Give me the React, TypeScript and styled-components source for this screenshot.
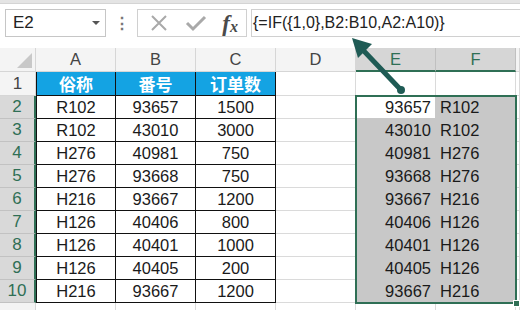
import React from "react";
import styled, { createGlobalStyle, css } from "styled-components";

const GlobalStyle = createGlobalStyle`
    html, body {
        margin: 0;
        padding: 0;
        background: #ffffff;
        font-family: "Liberation Sans", Arial, "Noto Sans CJK SC", sans-serif;
    }
    * {
        box-sizing: border-box;
    }
`;

const green = "#2f6f55";

const rows = [
    ["R102", "93657", "1500"],
    ["R102", "43010", "3000"],
    ["H276", "40981", "750"],
    ["H276", "93668", "750"],
    ["H216", "93667", "1200"],
    ["H126", "40406", "800"],
    ["H126", "40401", "1000"],
    ["H126", "40405", "200"],
    ["H216", "93667", "1200"],
];

const columns = ["A", "B", "C", "D", "E", "F"];

export default function App() {
    return (
        <Page>
            <GlobalStyle />
            <TopStrip />
            <FormulaBar>
                <NameBox>
                    <span>E2</span>
                    <Caret />
                </NameBox>
                <Grip>⋮</Grip>
                <FxBox>
                    <svg width="20" height="20" viewBox="0 0 20 20">
                        <path d="M3 3 L17 17 M17 3 L3 17" stroke="#a9a9a9" strokeWidth="2" fill="none" />
                    </svg>
                    <svg width="22" height="20" viewBox="0 0 22 20">
                        <path d="M2 10 L8 16 L20 4" stroke="#a9a9a9" strokeWidth="3" fill="none" />
                    </svg>
                    <FxLabel>
                        f<sub>x</sub>
                    </FxLabel>
                </FxBox>
                <FormulaInput>{"{=IF({1,0},B2:B10,A2:A10)}"}</FormulaInput>
            </FormulaBar>

            <Sheet>
                <Corner>
                    <CornerTriangle />
                </Corner>
                {columns.map((c) => (
                    <ColHeader key={c} selected={c === "E" || c === "F"}>
                        {c}
                    </ColHeader>
                ))}
                <ColHeader />

                <RowHeader>1</RowHeader>
                <Cell kind="head" first>俗称</Cell>
                <Cell kind="head">番号</Cell>
                <Cell kind="head">订单数</Cell>
                <Cell />
                <Cell />
                <Cell />
                <Cell />

                {rows.map((r, i) => (
                    <React.Fragment key={i}>
                        <RowHeader selected>{i + 2}</RowHeader>
                        <Cell kind="table" first>{r[0]}</Cell>
                        <Cell kind="table">{r[1]}</Cell>
                        <Cell kind="table">{r[2]}</Cell>
                        <Cell />
                        <Cell kind={i === 0 ? "active" : "picked"} align="right">
                            {r[1]}
                        </Cell>
                        <Cell kind="picked" align="left">
                            {r[0]}
                        </Cell>
                        <Cell />
                    </React.Fragment>
                ))}

                <RowHeader />
                {columns.map((c) => (
                    <Cell key={c} />
                ))}
                <Cell />

                <Selection>
                    <FillHandle />
                </Selection>
            </Sheet>

            <Arrow width="60" height="62" viewBox="0 0 60 62">
                <path d="M52 55 L13 14" stroke="#1f5b55" strokeWidth="5" strokeLinecap="round" />
                <path d="M3 3 L23 9 L9 23 Z" fill="#1f5b55" />
                <circle cx="52" cy="55" r="4" fill="#1f5b55" />
            </Arrow>
        </Page>
    );
}

const Page = styled.div`
    position: relative;
    width: 520px;
    height: 310px;
    overflow: hidden;
    background: #ffffff;
`;

const TopStrip = styled.div`
    height: 4px;
    background: #e4e4e4;
    border-bottom: 1px solid #d4d4d4;
`;

const FormulaBar = styled.div`
    height: 44px;
    display: flex;
    align-items: center;
    padding: 0 0 6px 5px;
`;

const NameBox = styled.div`
    width: 101px;
    height: 28px;
    border: 1px solid #c6c6c6;
    display: flex;
    align-items: center;
    justify-content: space-between;
    padding: 0 5px 0 7px;
    font-size: 17px;
    color: #222;
`;

const Caret = styled.div`
    width: 0;
    height: 0;
    border-left: 4px solid transparent;
    border-right: 4px solid transparent;
    border-top: 4px solid #555;
`;

const Grip = styled.div`
    width: 31px;
    text-align: center;
    color: #777;
    font-size: 16px;
    font-weight: bold;
`;

const FxBox = styled.div`
    width: 110px;
    height: 28px;
    border: 1px solid #d0d0d0;
    display: flex;
    align-items: center;
    justify-content: space-between;
    padding: 0 8px 0 11px;
`;

const FxLabel = styled.span`
    font-family: "Liberation Serif", "Times New Roman", serif;
    font-style: italic;
    font-weight: bold;
    font-size: 23px;
    color: #4a4a4a;
    line-height: 1;
    sub {
        font-size: 16px;
        vertical-align: -1px;
    }
`;

const FormulaInput = styled.div`
    margin-left: 4px;
    flex: 1;
    height: 28px;
    border: 1px solid #d0d0d0;
    border-right: none;
    display: flex;
    align-items: center;
    padding-left: 1px;
    font-size: 16px;
    color: #222;
    white-space: nowrap;
`;

const Sheet = styled.div`
    position: relative;
    display: grid;
    grid-template-columns: 36px repeat(6, 80px) 1fr;
    grid-template-rows: 24px 24px repeat(9, 23px) 12px;
    font-size: 16.5px;
`;

const Corner = styled.div`
    position: relative;
    background: #f4f4f4;
    border-right: 1px solid #d6d6d6;
    border-bottom: 1px solid #d6d6d6;
`;

const CornerTriangle = styled.div`
    position: absolute;
    right: 3px;
    bottom: 3px;
    width: 0;
    height: 0;
    border-left: 15px solid transparent;
    border-bottom: 15px solid #c8c8c8;
`;

const ColHeader = styled.div<{ selected?: boolean }>`
    display: flex;
    align-items: center;
    justify-content: center;
    background: #f4f4f4;
    color: #444;
    border-right: 1px solid #d6d6d6;
    border-bottom: 1px solid #d6d6d6;
    ${({ selected }) =>
        selected &&
        css`
            background: #d6d6d6;
            color: ${green};
            border-right-color: #c0c0c0;
            border-bottom: 2px solid ${green};
        `}
`;

const RowHeader = styled.div<{ selected?: boolean }>`
    display: flex;
    align-items: center;
    justify-content: center;
    background: #f4f4f4;
    color: #444;
    font-size: 17px;
    border-right: 1px solid #d6d6d6;
    border-bottom: 1px solid #d6d6d6;
    ${({ selected }) =>
        selected &&
        css`
            background: #d9d9d9;
            color: ${green};
            border-right: 2px solid ${green};
            border-bottom-color: #c2c2c2;
        `}
`;

type CellKind = "plain" | "head" | "table" | "picked" | "active";

const Cell = styled.div<{ kind?: CellKind; first?: boolean; align?: "left" | "right" }>`
    display: flex;
    align-items: center;
    justify-content: center;
    color: #1a1a1a;
    border-right: 1px solid #dadada;
    border-bottom: 1px solid #dadada;
    ${({ align }) =>
        align === "right" &&
        css`
            justify-content: flex-end;
            padding-right: 4px;
        `}
    ${({ align }) =>
        align === "left" &&
        css`
            justify-content: flex-start;
            padding-left: 4px;
        `}
    ${({ kind }) =>
        kind === "head" &&
        css`
            background: #14a3e3;
            color: #ffffff;
            font-weight: bold;
            font-size: 17px;
            border-right-color: #111;
            border-bottom-color: #111;
        `}
    ${({ kind }) =>
        kind === "table" &&
        css`
            border-right-color: #111;
            border-bottom-color: #111;
        `}
    ${({ first }) =>
        first &&
        css`
            border-left: 1px solid #111;
        `}
    ${({ kind }) =>
        kind === "picked" &&
        css`
            background: #c8c8c8;
            border-right-color: #c8c8c8;
            border-bottom-color: #c8c8c8;
        `}
    ${({ kind }) =>
        kind === "active" &&
        css`
            background: #ffffff;
            border-right-color: #c8c8c8;
            border-bottom-color: #c8c8c8;
        `}
`;

const Selection = styled.div`
    position: absolute;
    left: 355px;
    top: 47px;
    width: 162px;
    height: 209px;
    border: 2px solid ${green};
    pointer-events: none;
`;

const FillHandle = styled.div`
    position: absolute;
    right: -5px;
    bottom: -5px;
    width: 7px;
    height: 7px;
    background: ${green};
    border: 1px solid #fff;
`;

const Arrow = styled.svg`
    position: absolute;
    left: 349px;
    top: 35px;
`;
